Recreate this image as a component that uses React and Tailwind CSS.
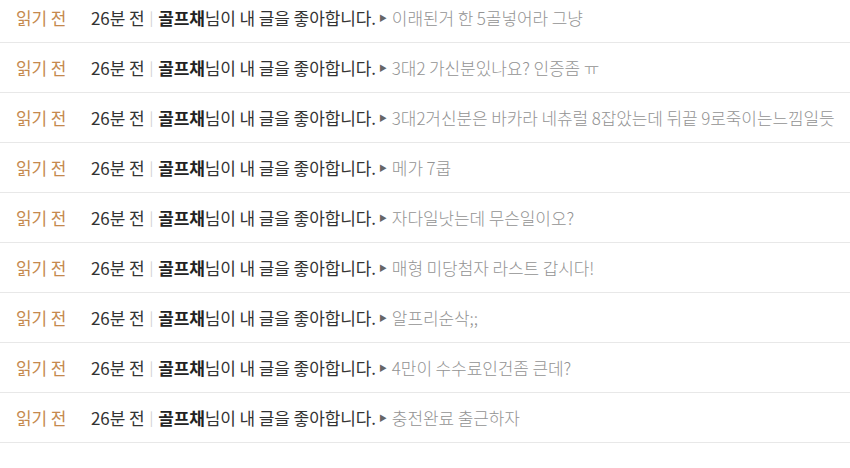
import React from 'react';

const notices = [
  '이래된거 한 5골넣어라 그냥',
  '3대2 가신분있나요? 인증좀 ㅠ',
  '3대2거신분은 바카라 네츄럴 8잡았는데 뒤끝 9로죽이는느낌일듯',
  '메가 7쿱',
  '자다일낫는데 무슨일이오?',
  '매형 미당첨자 라스트 갑시다!',
  '알프리순삭;;',
  '4만이 수수료인건좀 큰데?',
  '충전완료 출근하자',
];

function NoticeRow({ comment }) {
  return (
    <li className="flex items-center h-[50px] border-b border-[#e8e8e8] whitespace-nowrap">
      <span className="w-[91px] pl-[16px] shrink-0 text-[#c5894e]">읽기 전</span>
      <span className="text-[#333]">26분 전</span>
      <span className="mx-[5px] text-[#d0d0d0] text-[14px]">|</span>
      <span className="text-[#333]">
        <b className="font-bold text-[#222]">골프채</b>님이 내 글을 좋아합니다.
      </span>
      <span className="ml-[3px] mr-[5px] text-[#666] text-[8px]">▶</span>
      <span className="text-[#939393] font-light">{comment}</span>
    </li>
  );
}

export default function App() {
  return (
    <div className="w-[850px] h-[468px] overflow-hidden bg-white font-['Malgun_Gothic','Noto_Sans_CJK_KR',sans-serif] text-[17px] tracking-[-0.1px]">
      <ul className="-mt-[7px]">
        {notices.map((c, i) => (
          <NoticeRow key={i} comment={c} />
        ))}
      </ul>
    </div>
  );
}
